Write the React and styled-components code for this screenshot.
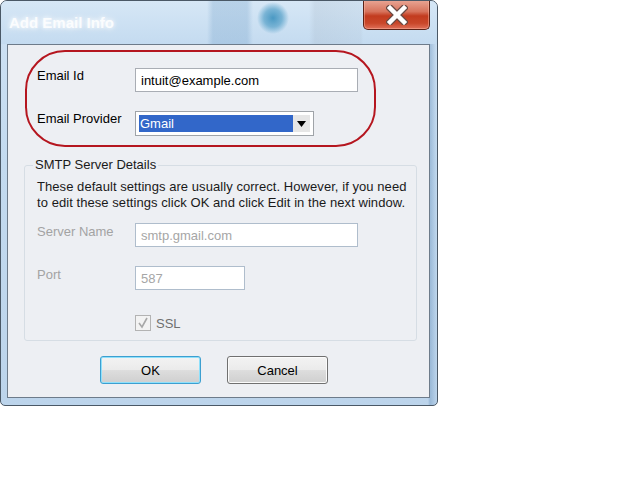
import React from 'react'
import styled, {createGlobalStyle} from 'styled-components'

const GlobalStyle = createGlobalStyle`
  body {
    margin: 0;
    background: #fff;
    font-family: "Liberation Sans", Arial, sans-serif;
  }
`

const Window = styled.div`
  width: 438px;
  height: 406px;
  box-sizing: border-box;
  display: flex;
  flex-direction: column;
  border: 1px solid #4a5866;
  border-radius: 7px 7px 5px 5px;
  background:
    linear-gradient(90deg, rgba(0,0,0,0) 0, rgba(0,0,0,0) 427px, rgba(110,150,190,.45) 429px, rgba(0,0,0,0) 436px),
    linear-gradient(180deg, #cfe2f4 0%, #c3daef 40%, #bcd4eb 100%);
  overflow: hidden;
`

const TitleBar = styled.div`
  height: 43px;
  display: flex;
  align-items: flex-start;
  padding-left: 8px;
  background:
    radial-gradient(circle at 272px 17px, rgba(60,145,190,.9) 0, rgba(85,160,200,.7) 9px, rgba(160,200,230,0) 16px),
    linear-gradient(90deg, rgba(0,0,0,0) 0, rgba(0,0,0,0) 206px, rgba(115,160,200,.3) 212px, rgba(115,160,200,.3) 246px, rgba(0,0,0,0) 252px),
    linear-gradient(90deg, rgba(0,0,0,0) 0, rgba(0,0,0,0) 308px, rgba(160,175,190,.22) 314px, rgba(160,175,190,.12) 360px, rgba(0,0,0,0) 362px),
    linear-gradient(180deg, #d6e7f6 0%, #c4dbf0 100%);
`

const Title = styled.div`
  margin-top: 13px;
  font-size: 15px;
  font-weight: bold;
  line-height: 18px;
  color: rgba(255,255,255,.85);
  text-shadow: 0 0 4px rgba(255,255,255,.9), 0 0 8px rgba(255,255,255,.7);
`

const CloseButton = styled.div`
  margin-left: auto;
  margin-right: 7px;
  margin-top: -1px;
  width: 67px;
  height: 30px;
  box-sizing: border-box;
  display: flex;
  align-items: center;
  justify-content: center;
  border: 1px solid #5b2217;
  border-top: none;
  border-radius: 0 0 5px 5px;
  background: linear-gradient(180deg, #e9a796 0%, #d7735c 40%, #c23b1f 55%, #c9472a 80%, #e0705a 100%);
  box-shadow: inset 0 0 0 1px rgba(255,190,170,.45);
`

const Client = styled.div`
  flex: 1;
  margin: 0 7px 7px 6px;
  border: 1px solid #6d7b8a;
  background: #edeff3;
  display: flex;
  flex-direction: column;
`

const Oval = styled.div`
  margin: 5px 0 0 17px;
  width: 351px;
  height: 97px;
  box-sizing: border-box;
  border: 2px solid #b5161f;
  border-radius: 40px / 40px;
  padding: 16px 0 0 10px;
  display: flex;
  flex-direction: column;
  gap: 19px;
`

const Row = styled.div`
  display: flex;
  align-items: flex-start;
`

const Label = styled.div`
  width: 98px;
  font-size: 13px;
  line-height: 16px;
  padding-top: ${p => p.$offset || 0}px;
  color: ${p => (p.$disabled ? '#a3a3a3' : '#000')};
  white-space: nowrap;
`

const TextBox = styled.div`
  width: ${p => p.$width}px;
  height: 24px;
  box-sizing: border-box;
  border: 1px solid ${p => (p.$disabled ? '#afbdcc' : '#a9adb4')};
  background: #fff;
  padding: 4px 0 0 5px;
  font-size: 13px;
  line-height: 16px;
  color: ${p => (p.$disabled ? '#a6a6a6' : '#000')};
`

const Select = styled.div`
  width: 179px;
  height: 25px;
  box-sizing: border-box;
  border: 1px solid #9fa3a8;
  background: #fff;
  padding: 3px;
  display: flex;
`

const Selected = styled.div`
  flex: 1;
  background: #3267c9;
  color: #fff;
  font-size: 13px;
  line-height: 17px;
  padding-left: 1px;
`

const DropArrow = styled.div`
  width: 17px;
  background: #e6e6e6;
  display: flex;
  align-items: center;
  justify-content: center;
`

const Group = styled.fieldset`
  margin: 10px 0 0 16px;
  width: 393px;
  box-sizing: border-box;
  padding: 0 0 9px 12px;
  border: 1px solid #d6dde4;
  border-radius: 3px;
`

const Legend = styled.legend`
  margin-left: -4px;
  padding: 0 2px;
  font-size: 13px;
  line-height: 16px;
  color: #1a1a1a;
`

const Note = styled.div`
  margin-top: 6px;
  font-size: 13px;
  line-height: 16px;
  letter-spacing: 0.06px;
  color: #1a1a1a;
  white-space: nowrap;
`

const GroupRow = styled(Row)`
  margin-top: ${p => p.$top}px;
`

const CheckRow = styled.div`
  margin: 25px 0 0 98px;
  display: flex;
  align-items: center;
  gap: 5px;
  font-size: 13px;
  color: #6f6f6f;
`

const CheckBox = styled.div`
  width: 16px;
  height: 16px;
  box-sizing: border-box;
  border: 1px solid #b3b3b3;
  background: #f3f3f3;
  display: flex;
  align-items: center;
  justify-content: center;
`

const Buttons = styled.div`
  margin-top: 15px;
  padding-left: 92px;
  display: flex;
  gap: 26px;
`

const Button = styled.div`
  width: 101px;
  height: 28px;
  box-sizing: border-box;
  border: 1px solid ${p => (p.$default ? '#3c9fd0' : '#707070')};
  border-radius: 3px;
  background: linear-gradient(180deg, #f3f3f3 0%, #ebebeb 48%, #dddddd 52%, #cfcfcf 100%);
  box-shadow: ${p => (p.$default ? 'inset 0 0 0 1px #8fe0fb' : 'inset 0 0 0 1px #fbfbfb')};
  display: flex;
  align-items: center;
  justify-content: center;
  font-size: 13px;
  color: #000;
`

export default function App() {
  return (
    <>
      <GlobalStyle />
      <Window>
        <TitleBar>
          <Title>Add Email Info</Title>
          <CloseButton>
            <svg width="22" height="20" viewBox="0 0 22 20">
              <path d="M4 3 L18 17 M18 3 L4 17" stroke="#6a4a44" strokeWidth="7" strokeLinecap="square" />
              <path d="M4 3 L18 17 M18 3 L4 17" stroke="#fff" strokeWidth="4.5" strokeLinecap="square" />
            </svg>
          </CloseButton>
        </TitleBar>
        <Client>
          <Oval>
            <Row>
              <Label>Email Id</Label>
              <TextBox $width={223}>intuit@example.com</TextBox>
            </Row>
            <Row>
              <Label>Email Provider</Label>
              <Select>
                <Selected>Gmail</Selected>
                <DropArrow>
                  <svg width="9" height="6" viewBox="0 0 9 6">
                    <path d="M0 0 H9 L4.5 6 Z" fill="#000" />
                  </svg>
                </DropArrow>
              </Select>
            </Row>
          </Oval>
          <Group>
            <Legend>SMTP Server Details</Legend>
            <Note>
              These default settings are usually correct. However, if you need
              <br />
              to edit these settings click OK and click Edit in the next window.
            </Note>
            <GroupRow $top={12}>
              <Label $disabled $offset={1}>Server Name</Label>
              <TextBox $width={223} $disabled>smtp.gmail.com</TextBox>
            </GroupRow>
            <GroupRow $top={19}>
              <Label $disabled $offset={1}>Port</Label>
              <TextBox $width={110} $disabled>587</TextBox>
            </GroupRow>
            <CheckRow>
              <CheckBox>
                <svg width="12" height="12" viewBox="0 0 12 12">
                  <path d="M2 6 L5 10 L10 1" stroke="#a8a8a8" strokeWidth="1.6" fill="none" />
                </svg>
              </CheckBox>
              SSL
            </CheckRow>
          </Group>
          <Buttons>
            <Button $default>OK</Button>
            <Button>Cancel</Button>
          </Buttons>
        </Client>
      </Window>
    </>
  )
}
